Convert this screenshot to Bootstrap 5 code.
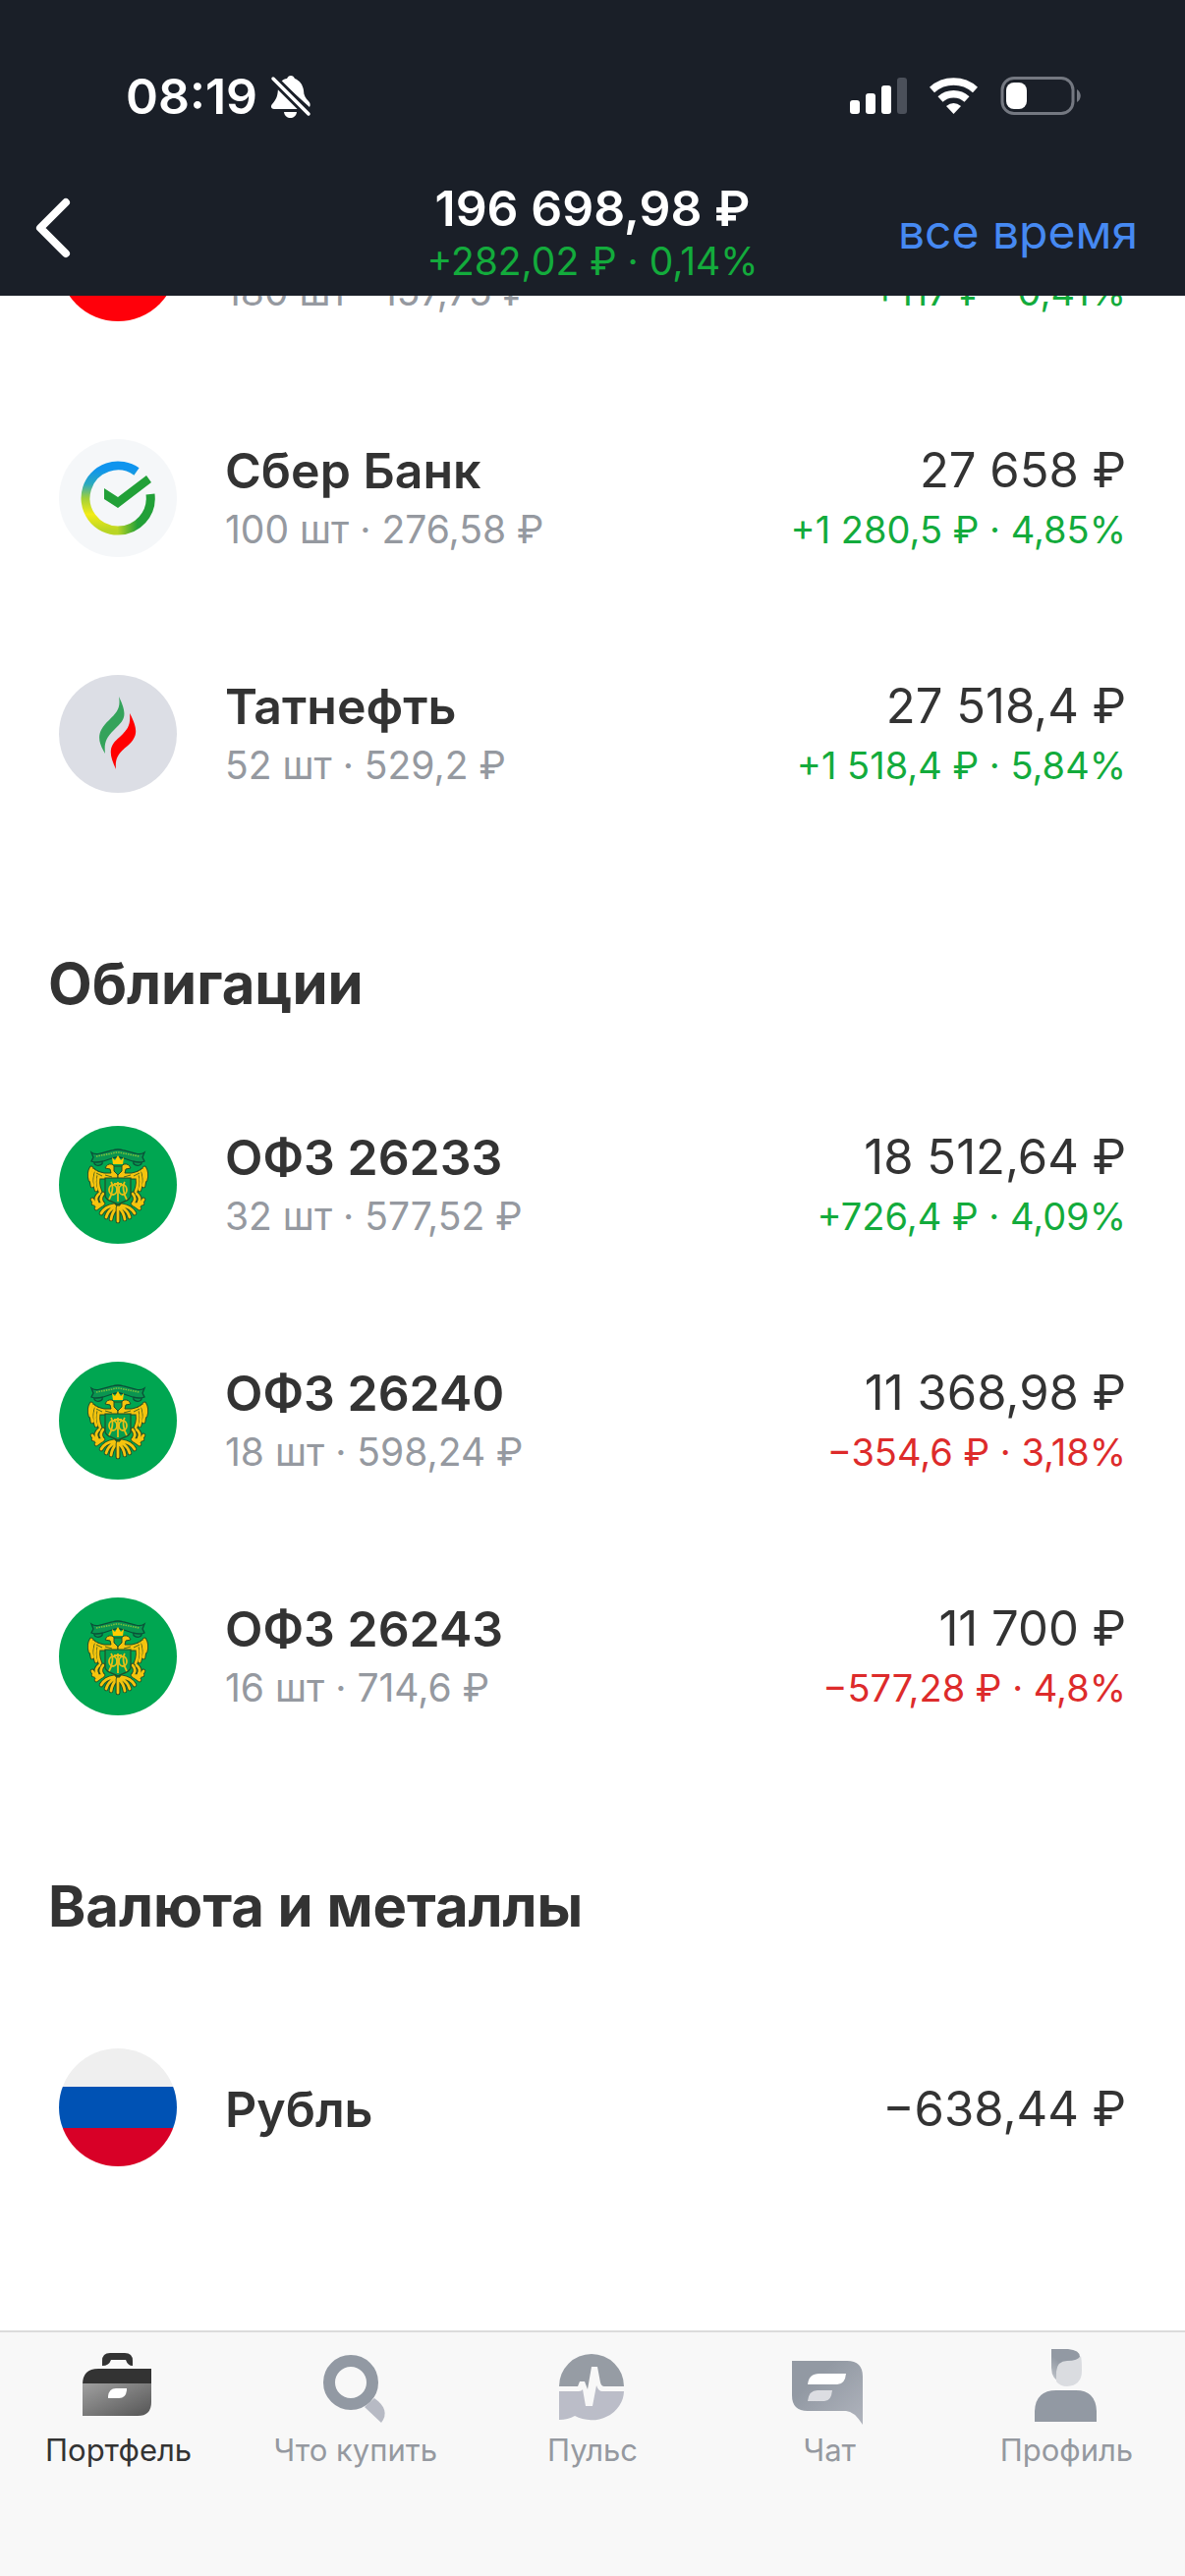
<!DOCTYPE html>
<html lang="ru">
<head>
  <meta charset="UTF-8" />
  <meta name="viewport" content="width=device-width, initial-scale=1.0"/>
  <title>Портфель</title>
  <link href="https://cdn.jsdelivr.net/npm/bootstrap@5.3.0/dist/css/bootstrap.min.css" rel="stylesheet"/>
  <style>
    body { font-family: Inter, "Noto Sans", sans-serif; color: #333; background: #fff; }

    .app-header { background: #1a1f28; height: 301px; }
    .status-bar { padding: 66px 98px 0 128px; height: 168px; }
    .clock { font-size: 50px; line-height: 64px; font-weight: 600; margin-right: 12px; }
    .title-bar { display: grid; grid-template-columns: 1fr auto 1fr; padding: 14px 36px 0; }
    .total { font-size: 50px; line-height: 60px; font-weight: 600; }
    .total-change { font-size: 39px; line-height: 48px; }
    .period { font-size: 48px; line-height: 60px; color: #4689f2; margin-right: 12px; }

    .asset-list { padding-bottom: 107px; }
    .asset { height: 240px; padding: 0 60px; }
    .asset > div { padding-top: 4px; }
    /* first row is scrolled half out of view */
    .asset-cut { height: 86px; padding: 0 60px 60px; overflow: hidden; }
    .asset-logo { width: 120px; height: 120px; margin-right: 49px; flex: none; }
    .asset-name { font-size: 50px; line-height: 60px; font-weight: 600; }
    .asset-sum { font-size: 49px; line-height: 60px; }
    .asset-note { font-size: 38px; line-height: 60px; }
    .asset-note.muted-text { font-size: 39px; }
    .muted-text { color: #9599a0; }
    .gain { color: #13ab3c; }
    .loss { color: #dd2b2b; }
    .group-title { font-size: 58px; line-height: 72px; font-weight: 700; padding: 98px 49px 49px; }

    .tab-bar { background: #f8f8f8; border-top: 2px solid #dcdcdc; height: 250px; }
    .tab-link { color: #9599a0; font-size: 31px; line-height: 40px; padding-top: 10px; text-decoration: none; }
    .tab-link.active { color: #333; }
    .tab-link svg { width: 90px; height: 90px; }
  </style>
</head>
<body>
  <!-- Shared drawings -->
  <svg width="0" height="0" class="position-absolute" aria-hidden="true">
    <defs>
      <linearGradient id="caseFill" x1="0" y1="0" x2="1" y2="1">
        <stop offset="0" stop-color="#a0a0a0"/><stop offset="1" stop-color="#555"/>
      </linearGradient>
      <linearGradient id="chatFill" x1="0" y1="0" x2="1" y2="1">
        <stop offset="0.3" stop-color="#9299a3"/><stop offset="1" stop-color="#b0b4bd"/>
      </linearGradient>
      <linearGradient id="hairFill" x1="0" y1="1" x2="0.6" y2="0">
        <stop offset="0.1" stop-color="#bfc3c9"/><stop offset="0.6" stop-color="#9299a3"/>
      </linearGradient>
      <linearGradient id="ringFill" x1="0" y1="0" x2="0" y2="1">
        <stop offset="0.05" stop-color="#0f94ee"/><stop offset="0.28" stop-color="#2aa9c0"/>
        <stop offset="0.5" stop-color="#a0cf3a"/><stop offset="0.75" stop-color="#f3ec17"/>
        <stop offset="1" stop-color="#b9d525"/>
      </linearGradient>
      <linearGradient id="ringEnd" x1="0" y1="0" x2="1" y2="0">
        <stop offset="0" stop-color="#b9d525"/><stop offset="0.6" stop-color="#22a038"/>
      </linearGradient>
      <g id="plumage" fill="none" stroke-linecap="round">
        <path d="M33 43q-3 5-1 12M35 45q-3 9-1 16M38 47q-3 10 0 18M41 50q-3 8 1 17"/>
        <path d="M41 69q-5 4-2 9M45 69q-4 5-1 9M35 79l9 1M38 84l7-5M34 75l4 6"/>
        <path d="M56 81q-9 1-13 8M57 82q-7 4-9 11M59 83q-5 5-6 12M60 83v14"/>
      </g>
      <g id="eagleHalf">
        <use href="#plumage" stroke="#234d26" stroke-width="4.600"/>
        <path d="M60 54H41q-2-4-9-12 7 5 14 6l7 0-1-4-5-1q2-5 7-4l6 5z" fill="#f5c40e" stroke="#234d26"/>
        <use href="#plumage" stroke="#f5c40e" stroke-width="2.800"/>
        <path d="M38 48l6 3M47 50l7 2" stroke="#4c6b1c"/>
      </g>
      <symbol id="emblem" viewBox="0 0 120 120">
        <circle cx="60" cy="60" r="60" fill="#00a651"/>
        <g fill="#0a9550" stroke="#0b4f38" stroke-width="1.300">
          <path d="M39 34c-4 0-4 5-1 6 3 1 7-1 6-3M81 34c4 0 4 5 1 6-3 1-7-1-6-3"/>
          <path d="M33 27c3 2 6 2 9 1l12-3q6-2 12 0l12 3c3 1 6 1 9-1l-2 5 2 4c-4 2-8 1-12 0l-9-3q-6-2-12 0l-9 3c-4 1-8 2-12 0l2-4z"/>
        </g>
        <path d="M38 31l16-3q6-2 12 0l16 3" fill="none" stroke="#7fc03c" stroke-width="1.600" stroke-dasharray="1.500 1"/>
        <use href="#eagleHalf"/>
        <use href="#eagleHalf" transform="matrix(-1 0 0 1 120 0)"/>
        <path d="M47 53h26v18c0 5-8 6-13 9-5-3-13-4-13-9z" fill="#079d4e" stroke="#234d26" stroke-width="1.200"/>
        <path d="M56 41h8v5l-4 4-4-4z" fill="#0aa14d" stroke="#234d26"/>
        <path d="M55 39l-1-7 3 3 3-5 3 5 3-3-1 7z" fill="#fc0"/>
        <g fill="none" stroke="#e9c015" stroke-width="1.800">
          <path d="M53 57c3 4 1 13-2 18M67 57c-3 4-1 13 2 18M60 57v20M56 59h8"/>
          <ellipse cx="55" cy="65" rx="4" ry="5"/><ellipse cx="65" cy="65" rx="4" ry="5"/>
        </g>
      </symbol>
    </defs>
  </svg>

  <div class="d-flex flex-column min-vh-100">
    <header class="app-header text-white">
      <div class="status-bar d-flex justify-content-between align-items-start">
        <div class="d-flex align-items-center">
          <span class="clock">08:19</span>
          <svg width="44" height="48" viewBox="0 0 44 48" fill="#fff" aria-hidden="true">
            <path d="M12 9c2-2 4-3 6-3 1-2 2-3 4-3s3 1 4 3c5 2 8 6 9 12 0 5 2 8 5 11 2 2 2 4 1 6z"/>
            <path d="M9 14l23 23H5c-3 0-4-3-2-5 4-5 6-8 6-18z"/>
            <path d="M15 40h13c-1 8-12 8-13 0z"/>
            <path d="M4 6l36 36" stroke="#1a1f28" stroke-width="9"/>
            <path d="M4 6l36 36" stroke="#fff" stroke-width="3.500" stroke-linecap="round"/>
          </svg>
        </div>
        <svg class="mt-2" width="244" height="56" viewBox="0 0 244 56" aria-hidden="true">
          <g fill="#fff">
            <rect x="1" y="28" width="10" height="14" rx="3"/>
            <rect x="17" y="21" width="10" height="21" rx="3"/>
            <rect x="33" y="13" width="10" height="29" rx="3"/>
            <rect x="49" y="5" width="10" height="37" rx="3" fill="#4b505a"/>
            <path d="M106.500 42l-7.500-8q7.500-6 15 0z"/>
          </g>
          <path d="M84.500 17.500A33 33 0 0 1 128.500 17.500M93 27A20 20 0 0 1 120 27" fill="none" stroke="#fff" stroke-width="7.500"/>
          <rect x="156" y="5.500" width="72" height="36" rx="12" fill="none" stroke="#747881" stroke-width="3"/>
          <rect x="160" y="10" width="21" height="27" rx="8" fill="#fff"/>
          <path d="M232 17c5 3 5 10 0 13z" fill="#747881"/>
        </svg>
      </div>
      <div class="title-bar">
        <button type="button" class="btn p-0 border-0 text-start align-self-center pb-2" aria-label="Назад">
          <svg width="36" height="62" viewBox="0 0 36 62" fill="none" stroke="#fff" stroke-width="8" stroke-linecap="round" stroke-linejoin="round"><path d="M31 5L5 31l26 26"/></svg>
        </button>
        <div class="text-center">
          <div class="total">196 698,98 ₽</div>
          <div class="total-change gain">+282,02 ₽ · 0,14%</div>
        </div>
        <div class="text-end align-self-center">
          <button type="button" class="btn p-0 border-0 period">все время</button>
        </div>
      </div>
    </header>

    <main class="asset-list flex-grow-1">
      <div class="asset-cut d-flex align-items-end">
        <svg class="asset-logo" viewBox="0 0 120 120"><circle cx="60" cy="60" r="60" fill="#ff000a"/></svg>
        <div class="asset-note muted-text me-auto">180 шт · 157,75 ₽</div>
        <div class="asset-note gain">+117 ₽ · 0,41%</div>
      </div>

      <div class="asset d-flex align-items-center">
        <svg class="asset-logo" viewBox="0 0 120 120">
          <circle cx="60" cy="60" r="60" fill="#f5f7f9"/>
          <g fill="none" stroke-width="9">
            <path d="M79 33A33 33 0 1 0 60 93" stroke="url(#ringFill)"/>
            <path d="M60 93A33 33 0 0 0 93 56" stroke="url(#ringEnd)"/>
          </g>
          <path d="M46 50l14 9 29-22 5 7-34 26-14-9z" fill="#22a038"/>
        </svg>
        <div class="me-auto">
          <div class="asset-name">Сбер Банк</div>
          <div class="asset-note muted-text">100 шт · 276,58 ₽</div>
        </div>
        <div class="text-end">
          <div class="asset-sum">27 658 ₽</div>
          <div class="asset-note gain">+1 280,5 ₽ · 4,85%</div>
        </div>
      </div>

      <div class="asset d-flex align-items-center">
        <svg class="asset-logo" viewBox="0 0 120 120">
          <circle cx="60" cy="60" r="60" fill="#dcdee5"/>
          <path d="M61 22c10 21 5 24-5 34-9 9-10 14-9 24-8-13-9-22 4-34 8-8 12-12 10-24z" fill="#34a35b"/>
          <path d="M72 39c9 17 8 24-2 33-10 8-13 13-12 24-8-17-7-24 4-33 9-8 11-13 10-24z" fill="#f00"/>
        </svg>
        <div class="me-auto">
          <div class="asset-name">Татнефть</div>
          <div class="asset-note muted-text">52 шт · 529,2 ₽</div>
        </div>
        <div class="text-end">
          <div class="asset-sum">27 518,4 ₽</div>
          <div class="asset-note gain">+1 518,4 ₽ · 5,84%</div>
        </div>
      </div>

      <h2 class="group-title m-0">Облигации</h2>

      <div class="asset d-flex align-items-center">
        <svg class="asset-logo"><use href="#emblem"/></svg>
        <div class="me-auto">
          <div class="asset-name">ОФЗ 26233</div>
          <div class="asset-note muted-text">32 шт · 577,52 ₽</div>
        </div>
        <div class="text-end">
          <div class="asset-sum">18 512,64 ₽</div>
          <div class="asset-note gain">+726,4 ₽ · 4,09%</div>
        </div>
      </div>

      <div class="asset d-flex align-items-center">
        <svg class="asset-logo"><use href="#emblem"/></svg>
        <div class="me-auto">
          <div class="asset-name">ОФЗ 26240</div>
          <div class="asset-note muted-text">18 шт · 598,24 ₽</div>
        </div>
        <div class="text-end">
          <div class="asset-sum">11 368,98 ₽</div>
          <div class="asset-note loss">−354,6 ₽ · 3,18%</div>
        </div>
      </div>

      <div class="asset d-flex align-items-center">
        <svg class="asset-logo"><use href="#emblem"/></svg>
        <div class="me-auto">
          <div class="asset-name">ОФЗ 26243</div>
          <div class="asset-note muted-text">16 шт · 714,6 ₽</div>
        </div>
        <div class="text-end">
          <div class="asset-sum">11 700 ₽</div>
          <div class="asset-note loss">−577,28 ₽ · 4,8%</div>
        </div>
      </div>

      <h2 class="group-title m-0">Валюта и металлы</h2>

      <div class="asset d-flex align-items-center">
        <svg class="asset-logo rounded-circle" viewBox="0 0 120 120">
          <path fill="#efefef" d="M0 0h120v39H0z"/>
          <path fill="#0052b4" d="M0 39h120v42H0z"/>
          <path fill="#d80027" d="M0 81h120v39H0z"/>
        </svg>
        <div class="asset-name me-auto">Рубль</div>
        <div class="asset-sum">−638,44 ₽</div>
      </div>
    </main>

    <nav class="tab-bar d-flex" aria-label="Разделы">
      <a href="#" class="tab-link active d-flex flex-column align-items-center w-100">
        <svg viewBox="0 0 90 90" aria-hidden="true">
          <path d="M28 24v-5q0-8 8-8h15q8 0 8 8v5q-5 0-7-6H37q-2 6-9 6z" fill="#333"/>
          <path d="M8 43q0-16 16-16h54v16z" fill="#333"/>
          <path d="M8 42h70v19q0 14-14 14H8z" fill="url(#caseFill)"/>
          <path d="M34 57v-2q1-8 8-8h11v2q-1 8-8 8z" fill="#fff"/>
        </svg>
        <span>Портфель</span>
      </a>
      <a href="#" class="tab-link d-flex flex-column align-items-center w-100">
        <svg viewBox="0 0 90 90" aria-hidden="true">
          <path d="M54 66l10-9q17 12 7 25z" fill="#b7bac4"/>
          <circle cx="40" cy="41" r="22" fill="none" stroke="#9299a3" stroke-width="12"/>
        </svg>
        <span>Что купить</span>
      </a>
      <a href="#" class="tab-link d-flex flex-column align-items-center w-100">
        <svg viewBox="0 0 90 90" aria-hidden="true">
          <path d="M11 45A33 33 0 0 1 77 45H57q-3 0-4-4L50 25h-6l-4 23-3-8h-5l-2 5z" fill="#969ca4"/>
          <path d="M11 50h20q3 0 4-2l3 17h7l4-21q2 6 6 6h22A33 30 0 0 1 27 75q-7 4-16 4z" fill="#bbbdc8"/>
        </svg>
        <span>Пульс</span>
      </a>
      <a href="#" class="tab-link d-flex flex-column align-items-center w-100">
        <svg viewBox="0 0 90 90" aria-hidden="true">
          <path d="M7 19h56q16 0 16 16v49q-9-14-17-14H23Q7 70 7 54z" fill="url(#chatFill)"/>
          <path d="M23 43q1-11 12-11h27q-1 11-9 11z" fill="#fff"/>
          <path d="M23 60q1-11 10-11h15q-1 11-8 11z" fill="#dcdde2"/>
        </svg>
        <span>Чат</span>
      </a>
      <a href="#" class="tab-link d-flex flex-column align-items-center w-100">
        <svg viewBox="0 0 90 90" aria-hidden="true">
          <path d="M30 7h17q12 1 12 8l-18 27q-11-4-11-16z" fill="url(#hairFill)"/>
          <path d="M35 40V30q1-11 11-11 11 0 14-5 1 4 1 15 0 15-15 16-7 0-11-5z" fill="#dadce0"/>
          <path d="M13 81V70q1-21 22-21h20q20 0 21 21v11z" fill="#9299a3"/>
        </svg>
        <span>Профиль</span>
      </a>
    </nav>
  </div>

  <script src="https://cdn.jsdelivr.net/npm/bootstrap@5.3.0/dist/js/bootstrap.bundle.min.js"></script>
</body>
</html>
